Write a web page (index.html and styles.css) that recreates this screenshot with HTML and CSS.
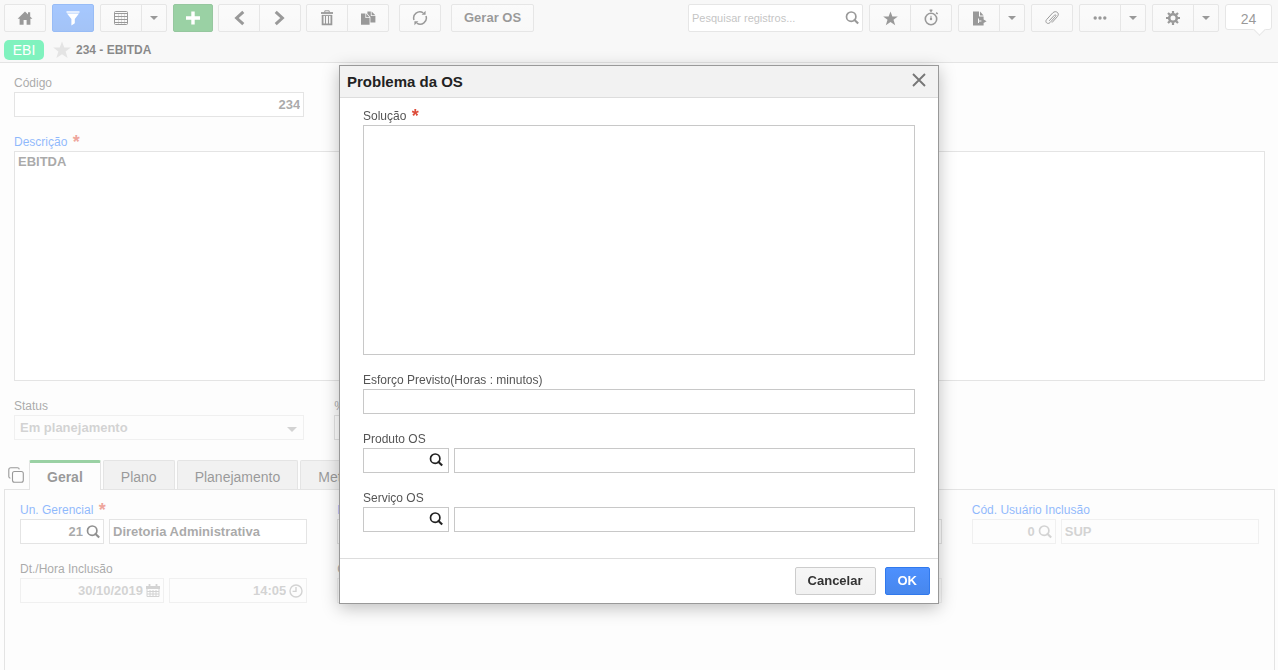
FILE: index.html
```
<!doctype html>
<html lang='pt-BR'>
<head>
  <title>234 - EBITDA</title>
  <meta charset='UTF-8'>
  <meta name='viewport' content='width=device-width, initial-scale=1'>
  <link rel="stylesheet" href="styles.css">
</head>
<body>
  <svg class='sprite' aria-hidden='true'>
    <symbol id='search' viewBox='0 0 14 14'>
      <circle cx='6.2' cy='5.7' r='4.7' fill='none' stroke='currentColor' stroke-width='1.7'/>
      <path d='M8.8 8.2 L13.2 12.6' stroke='currentColor' stroke-width='2.1'/>
    </symbol>
    <symbol id='star' viewBox='0 0 16 16'>
      <path d='M8 .4 L10 5.8 H15.8 L11.2 9.3 L13 15.2 L8 11.8 L3 15.2 L4.8 9.3 L.2 5.8 H6 Z' fill='currentColor'/>
    </symbol>
    <symbol id='caret' viewBox='0 0 8 4'>
      <path d='M0 0 H8 L4 4 Z' fill='currentColor'/>
    </symbol>
  </svg>

  <header class='header'>
    <div class='toolbar'>
      <button class='btn' aria-label='Início'>
        <svg width='16' height='16' viewBox='0 0 16 16'><path d='M8 1.5 L15.4 8.8 H13.4 V14.8 H9.6 V10 H6.6 V14.8 H2.6 V8.8 H.6 Z M11 2.2 H13.2 V6.6 L11 4.5 Z' fill='currentColor'/></svg>
      </button>
      <button class='btn btn-blue' aria-label='Filtro'>
        <svg width='14' height='15' viewBox='0 0 14 15'><path d='M.5 1 H13.5' stroke='currentColor' stroke-width='1.4'/><path d='M1 2.6 H13 L8.8 8 V12.2 L5.4 14.6 V8 Z' fill='currentColor'/></svg>
      </button>
      <div class='group'>
        <button class='btn' aria-label='Grade'>
          <svg width='14' height='14' viewBox='0 0 14 14' fill='none' stroke='currentColor'><rect x='.5' y='.5' width='13' height='13' rx='1'/><path d='M1 2.5 H13 M1 5.5 H13 M1 8.5 H13 M1 11.5 H13'/><path d='M4.5 3 V13 M7.5 3 V13 M10.5 3 V13' stroke-opacity='.3'/></svg>
        </button>
        <button class='btn btn-caret' aria-label='Mais visões'><svg width='8' height='4'><use href='#caret'/></svg></button>
      </div>
      <div class='actions'>
        <button class='btn btn-green' aria-label='Novo'>
          <svg width='14' height='14' viewBox='0 0 14 14'><path d='M7 .5 V13.5 M0 7 H14' stroke='currentColor' stroke-width='3.4'/></svg>
        </button>
        <div class='group'>
          <button class='btn' aria-label='Anterior'>
            <svg width='14' height='16' viewBox='0 0 14 16'><path d='M11.3 1.8 L4.6 8 L11.3 14.2' fill='none' stroke='currentColor' stroke-width='3'/></svg>
          </button>
          <button class='btn' aria-label='Próximo'>
            <svg width='14' height='16' viewBox='0 0 14 16'><path d='M2.7 1.8 L9.4 8 L2.7 14.2' fill='none' stroke='currentColor' stroke-width='3'/></svg>
          </button>
        </div>
        <div class='group'>
          <button class='btn' aria-label='Excluir'>
            <svg width='14' height='16' viewBox='0 0 14 16' fill='none' stroke='currentColor'><path d='M1 3 H13' stroke-width='1.8'/><path d='M4.8 2.6 V.8 H9.2 V2.6'/><path d='M2.6 5 V14.4 H11.4 V5' stroke-width='1.8'/><path d='M2 5.4 H12'/><path d='M5.5 6 V14 M8.5 6 V14' stroke-width='1.1'/></svg>
          </button>
          <button class='btn' aria-label='Duplicar'>
            <svg width='15' height='14' viewBox='0 0 15 14' fill='currentColor'><path d='M0 2.6 H4.4 V7 H8.6 V13.8 H0 Z M5.2 2.6 L8.6 6.2 H5.2 Z'/><path d='M6.4 .6 H9.8 V5 H14.4 V11.4 H9.4 V6 L6.4 2.8 Z M10.6 .6 L14.4 4.2 H10.6 Z'/></svg>
          </button>
        </div>
      </div>
      <button class='btn btn-apart' aria-label='Atualizar'>
        <svg width='16' height='16' viewBox='0 0 16 16'><path d='M2 10 A6.2 6.2 0 0 1 11.2 2.8 M14 6 A6.2 6.2 0 0 1 4.8 13.2' fill='none' stroke='currentColor' stroke-width='1.5'/><path d='M9.6 4.8 H13.6 V.8 Z M6.4 11.2 H2.4 V15.2 Z' fill='currentColor'/></svg>
      </button>
      <button class='btn btn-text btn-apart'>Gerar OS</button>

      <div class='search'>
        <input type='text' placeholder='Pesquisar registros...' aria-label='Pesquisar registros'>
        <svg width='14' height='14'><use href='#search'/></svg>
      </div>
      <div class='group'>
        <button class='btn' aria-label='Favoritos'><svg width='15' height='15'><use href='#star'/></svg></button>
        <button class='btn' aria-label='Cronômetro'>
          <svg class='raised' width='16' height='17' viewBox='0 0 16 17'><circle cx='8' cy='10' r='5.7' fill='none' stroke='currentColor' stroke-width='1.6'/><path d='M6.6 1.2 H9.4 M8 1.2 V3 M13.2 3.6 L14.6 5' stroke='currentColor' stroke-width='1.5'/><path d='M8 6.8 V10' stroke='currentColor'/><circle cx='8' cy='10' r='1.2' fill='currentColor'/></svg>
        </button>
      </div>
      <div class='group'>
        <button class='btn' aria-label='Relatórios'>
          <svg width='15' height='15' viewBox='0 0 15 15' fill='currentColor'><path d='M1 .4 H7 V5.4 H11.6 V8.4 L14.6 10.2 L11.6 12 V14.4 H1 Z M6 7.6 V12 H7 V10.6 H9.4 V9.4 H7 V7.6 Z' fill-rule='evenodd'/><path d='M8 .4 L11.6 4.4 H8 Z'/></svg>
        </button>
        <button class='btn btn-caret' aria-label='Mais relatórios'><svg width='8' height='4'><use href='#caret'/></svg></button>
      </div>
      <button class='btn' aria-label='Anexos'>
        <svg width='16' height='16' viewBox='0 0 16 16'><path d='M5.2 10.8 L10.4 5.2 C11.4 4.2 12.6 5.2 11.6 6.4 L6 12.6 C3.8 14.8 .4 12.2 2.6 9.6 L8.8 2.8 C11.8 0 16.2 3 13.4 6.6 L8 12.6' fill='none' stroke='currentColor'/></svg>
      </button>
      <div class='group'>
        <button class='btn' aria-label='Opções'>
          <svg width='14' height='4' viewBox='0 0 14 4' fill='currentColor'><circle cx='2.2' cy='2' r='1.7'/><circle cx='7' cy='2' r='1.7'/><circle cx='11.8' cy='2' r='1.7'/></svg>
        </button>
        <button class='btn btn-caret' aria-label='Mais opções'><svg width='8' height='4'><use href='#caret'/></svg></button>
      </div>
      <div class='group'>
        <button class='btn' aria-label='Configurações'>
          <svg width='14' height='14' viewBox='0 0 14 14' fill='none' stroke='currentColor'><circle cx='7' cy='7' r='3.8' stroke-width='2.6'/><path d='M7 0 V2.4 M7 11.6 V14 M0 7 H2.4 M11.6 7 H14 M2 2 L3.8 3.8 M10.2 10.2 L12 12 M12 2 L10.2 3.8 M3.8 10.2 L2 12' stroke-width='2.2'/></svg>
        </button>
        <button class='btn btn-caret' aria-label='Mais configurações'><svg width='8' height='4'><use href='#caret'/></svg></button>
      </div>
      <div class='counter'>24</div>
    </div>
    <div class='record'>
      <span class='badge'>EBI</span>
      <svg class='fav' width='18' height='18'><use href='#star'/></svg>
      <strong>234 - EBITDA</strong>
    </div>
  </header>

  <main class='page'>
    <form class='form'>
      <div class='field'>
        <label for='codigo'>Código</label>
        <input id='codigo' class='num' type='text' value='234'>
      </div>
      <div class='field wide'>
        <label for='descricao' class='link'>Descrição <span class='req'>*</span></label>
        <textarea id='descricao'>EBITDA</textarea>
      </div>
      <div class='field'>
        <label for='status'>Status</label>
        <div class='box off'>
          <select id='status' disabled><option>Em planejamento</option></select>
          <svg class='arrow' width='10' height='5' viewBox='0 0 8 4'><use href='#caret'/></svg>
        </div>
      </div>
      <div class='field'>
        <label for='perc'>% Concluído</label>
        <input id='perc' class='num' type='text'>
      </div>
    </form>

    <nav class='tabs'>
      <button class='copy' aria-label='Expandir abas'>
        <svg width='16' height='16' viewBox='0 0 16 16' fill='none' stroke='currentColor' stroke-width='1.1'><rect x='4.5' y='4.5' width='10.8' height='10.8' rx='2'/><path d='M2.4 11.2 C1.2 11 .8 10.2 .8 9.4 V2.8 C.8 1.4 1.6 .8 2.8 .8 H9.4 C10.6 .8 11.2 1.4 11.3 2.4'/></svg>
      </button>
      <button class='tab active'>Geral</button>
      <button class='tab'>Plano</button>
      <button class='tab'>Planejamento</button>
      <button class='tab'>Metas</button>
    </nav>

    <section class='panel'>
      <div class='field'>
        <label for='un' class='link'>Un. Gerencial <span class='req'>*</span></label>
        <div class='pair'>
          <div class='box code'><input id='un' class='num' type='text' value='21'><svg width='14' height='14'><use href='#search'/></svg></div>
          <input type='text' value='Diretoria Administrativa' aria-label='Nome da unidade gerencial'>
        </div>
      </div>
      <div class='field'>
        <label for='natureza' class='link'>Natureza</label>
        <input id='natureza' type='text'>
      </div>
      <div class='field'>
        <label for='resp'>Responsável</label>
        <input id='resp' type='text'>
      </div>
      <div class='field'>
        <label for='usuario' class='link'>Cód. Usuário Inclusão</label>
        <div class='pair off'>
          <div class='box code'><input id='usuario' class='num' type='text' value='0' disabled><svg width='14' height='14'><use href='#search'/></svg></div>
          <input type='text' value='SUP' aria-label='Usuário' disabled>
        </div>
      </div>
      <div class='field'>
        <label for='data'>Dt./Hora Inclusão</label>
        <div class='pair off'>
          <div class='box date'>
            <input id='data' class='num' type='text' value='30/10/2019' disabled>
            <svg width='14' height='14' viewBox='0 0 14 14'><path d='M0 2 H14 V5 H0 Z M2.6 0 H4.4 V2 H2.6 Z M9.6 0 H11.4 V2 H9.6 Z' fill='currentColor'/><path d='M1 5 V12.5 H13 V5 M1 7.5 H13 M1 10 H13 M4 6 V13 M7 6 V13 M10 6 V13' fill='none' stroke='currentColor'/></svg>
          </div>
          <div class='box time'>
            <input class='num' type='text' value='14:05' aria-label='Hora' disabled>
            <svg width='14' height='14' viewBox='0 0 14 14' fill='none' stroke='currentColor' stroke-width='1.4'><circle cx='7' cy='7' r='6'/><path d='M7 3 V7.4 H3.6'/></svg>
          </div>
        </div>
      </div>
      <div class='field'>
        <label for='alt'>Cód. Usuário Alteração</label>
        <div class='off'><input id='alt' type='text' disabled></div>
      </div>
      <div class='field'>
        <label for='dtalt'>Dt./Hora Alteração</label>
        <div class='off'><input id='dtalt' type='text' disabled></div>
      </div>
    </section>
  </main>

  <div class='overlay'>
    <div class='dialog' role='dialog' aria-labelledby='dialog_title'>
      <div class='dialog-head'>
        <h2 id='dialog_title'>Problema da OS</h2>
        <button class='close' aria-label='Fechar'>
          <svg width='14' height='14' viewBox='0 0 14 14'><path d='M1 1 L13 13 M13 1 L1 13' stroke='currentColor' stroke-width='1.9'/></svg>
        </button>
      </div>
      <form class='dialog-body'>
        <div class='field'>
          <label for='solucao'>Solução <span class='req'>*</span></label>
          <textarea id='solucao'></textarea>
        </div>
        <div class='field'>
          <label for='esforco'>Esforço Previsto(Horas : minutos)</label>
          <input id='esforco' type='text'>
        </div>
        <div class='field'>
          <label for='produto'>Produto OS</label>
          <div class='pair'>
            <div class='box code'><input id='produto' class='num' type='text'><svg width='14' height='14'><use href='#search'/></svg></div>
            <input type='text' aria-label='Nome do produto'>
          </div>
        </div>
        <div class='field'>
          <label for='servico'>Serviço OS</label>
          <div class='pair'>
            <div class='box code'><input id='servico' class='num' type='text'><svg width='14' height='14'><use href='#search'/></svg></div>
            <input type='text' aria-label='Nome do serviço'>
          </div>
        </div>
      </form>
      <div class='dialog-foot'>
        <button class='btn btn-text'>Cancelar</button>
        <button class='btn btn-text btn-blue'>OK</button>
      </div>
    </div>
  </div>
</body>
</html>
```
FILE: styles.css
```
* { box-sizing: border-box }
body {
  margin: 0;
  height: 100vh;
  overflow: hidden;
  display: flex;
  flex-direction: column;
  background: #fafafa;
  color: #333;
  font: 12px "Liberation Sans", Arial, sans-serif
}
button, input, select, textarea { font: inherit; color: inherit; margin: 0 }
svg { display: block; flex: none }
.sprite { position: absolute; width: 0; height: 0 }

/* Header */
.header {
  background: #f0f0f0;
  border-bottom: 1px solid #c8c8c8;
  padding: 4px 6px 2px 4px
}
.toolbar { display: flex; gap: 6px }
.btn {
  display: flex;
  align-items: center;
  justify-content: center;
  width: 42px;
  height: 28px;
  padding: 0;
  border: 1px solid #ccc;
  border-radius: 2px;
  background: linear-gradient(#f6f6f6, #f1f1f1);
  color: #333
}
.btn-caret { width: 26px }
.btn-text {
  width: auto;
  padding: 0 12px 2px;
  font-size: 13px;
  font-weight: bold
}
.btn-apart { margin-left: 4px }
.btn-blue {
  background: linear-gradient(#4d90fe, #4787ed);
  border-color: #3079ed;
  color: #fff
}
.btn-green {
  width: 40px;
  background: #35a349;
  border-color: #2d8f3f;
  color: #fff
}
.raised { margin-bottom: 2px }
.actions { display: flex; gap: 5px }
.group { display: flex }
.group > .btn + .btn { margin-left: -1px; border-radius: 0 2px 2px 0 }
.group > .btn:first-child { border-radius: 2px 0 0 2px }
.search {
  display: flex;
  align-items: center;
  width: 175px;
  height: 28px;
  margin-left: auto;
  padding: 0 3px;
  background: #fff;
  border: 1px solid #ccc;
  border-radius: 2px
}
.search input {
  flex: 1;
  min-width: 0;
  padding: 0;
  border: 0;
  background: none;
  font-size: 11px
}
.search input::placeholder { color: #888 }
.counter {
  position: relative;
  width: 47px;
  height: 26px;
  border: 1px solid #ccc;
  border-radius: 3px;
  background: #fff;
  font-size: 14px;
  line-height: 28px;
  text-align: center
}
.counter::after {
  content: '';
  position: absolute;
  right: 7px;
  bottom: -5px;
  width: 8px;
  height: 8px;
  background: #fff;
  border: solid #ccc;
  border-width: 0 1px 1px 0;
  transform: rotate(45deg)
}
.record {
  display: flex;
  align-items: center;
  height: 20px;
  margin-top: 8px
}
.record strong { color: #111 }
.badge {
  width: 40px;
  border-radius: 5px;
  background: #00e57c;
  color: #fff;
  font-size: 14px;
  line-height: 20px;
  text-align: center
}
.fav { margin: 0 5px 0 9px; color: #c8c8c8 }

/* Fields */
.page { flex: 1; display: flex; flex-direction: column; min-height: 0 }
.form {
  display: grid;
  grid-template-columns: repeat(4, 1fr);
  gap: 17px 30px;
  padding: 12px 13px 20px 14px
}
.wide { grid-column: 1 / -1 }
.field { display: flex; flex-direction: column; min-width: 0 }
.field label {
  line-height: 17px;
  color: #555;
  white-space: nowrap
}
.field label.link { color: #1a73f8 }
.req {
  margin-left: 2px;
  color: #dd4b39;
  font-size: 18px;
  font-weight: bold;
  line-height: 10px;
  vertical-align: -2px
}
.field input, .field textarea, .box {
  width: 100%;
  height: 25px;
  padding: 0 3px;
  border: 1px solid #c8c8c8;
  border-radius: 0;
  background: #fff;
  color: #555;
  font-size: 13px;
  font-weight: bold
}
.field textarea {
  display: block;
  height: 230px;
  padding: 2px 3px;
  resize: none
}
.field .num { text-align: right }
.box { display: flex; align-items: center; padding: 0 3px }
.field .box input {
  flex: 1;
  min-width: 0;
  height: 23px;
  padding: 0 3px 0 0;
  border: 0;
  background: none
}
.box svg { color: #222 }
.box select {
  flex: 1;
  padding: 0 2px;
  border: 0;
  background: none;
  appearance: none;
  opacity: 1
}
.box .arrow { margin: 4px 3px 0 0; color: #555 }
.off { opacity: .5 }
.off input, .off.box { background: #fafafa }
.off .box { background: none }
.off .box svg { color: #555 }
.pair { display: flex; gap: 5px }
.pair > input { flex: 1; min-width: 0 }
.code { flex: none; width: 84px }
.date { flex: none; width: 144px }
.time { flex: 1 }

/* Tabs */
.tabs { display: flex; gap: 2px; padding-left: 8px }
.copy {
  width: 19px;
  padding: 0;
  border: 0;
  background: none
}
.tab {
  height: 29px;
  padding: 4px 17px 0;
  border: 1px solid #c8c8c8;
  border-bottom: 0;
  border-radius: 2px 2px 0 0;
  background: #e3e3e3;
  font-size: 14px
}
.tab.active {
  z-index: 1;
  height: 30px;
  margin-bottom: -1px;
  padding-top: 0;
  border-top: 3px solid #35a349;
  background: #fafafa;
  font-weight: bold
}
.panel {
  flex: 1;
  display: grid;
  grid-template-columns: repeat(4, 1fr);
  align-content: start;
  gap: 17px 30px;
  margin: 0 3px 0 4px;
  padding: 12px 15px 0;
  border: 1px solid #c8c8c8;
  border-bottom: 0
}

/* Dialog */
.overlay {
  position: fixed;
  inset: 0;
  z-index: 2;
  display: grid;
  place-items: start center;
  padding-top: 65px;
  background: rgba(255, 255, 255, .5)
}
.dialog {
  width: 600px;
  border: 1px solid #999;
  background: #fff;
  box-shadow: 0 4px 16px rgba(0, 0, 0, .25)
}
.dialog-head {
  display: flex;
  align-items: center;
  justify-content: space-between;
  height: 32px;
  padding: 0 7px;
  border-bottom: 1px solid #ddd;
  background: #f2f2f2
}
.dialog-head h2 { margin: 0; color: #222; font-size: 15px }
.close {
  padding: 0 5px 3px;
  border: 0;
  background: none;
  color: #777
}
.dialog-body {
  display: flex;
  flex-direction: column;
  gap: 17px;
  padding: 10px 23px 26px
}
.dialog .code { width: 86px; padding: 0 5px 2px 3px }
.dialog-foot {
  display: flex;
  justify-content: flex-end;
  gap: 9px;
  padding: 8px;
  border-top: 1px solid #ddd
}
```
